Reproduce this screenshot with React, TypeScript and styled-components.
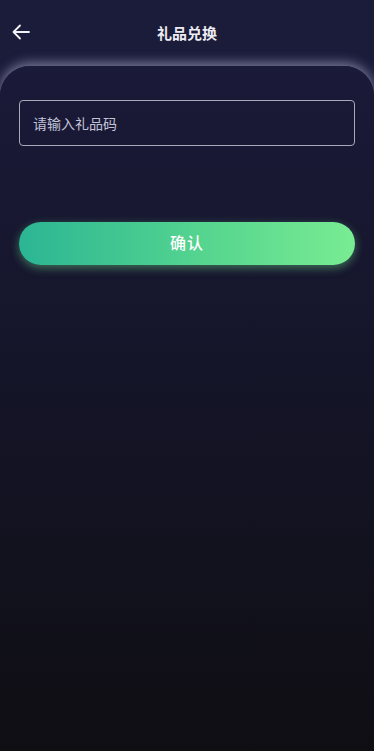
import React from "react";
import styled, { createGlobalStyle } from "styled-components";

const Global = createGlobalStyle`
  html, body { margin: 0; padding: 0; background: #1b1b3a; }
  body { font-family: "Noto Sans CJK SC", "Noto Sans", sans-serif; }
  * { box-sizing: border-box; }
`;

const Page = styled.div`
  width: 374px;
  height: 751px;
  background: #1b1b3a;
  display: flex;
  flex-direction: column;
  overflow: hidden;
`;

const Header = styled.header`
  height: 66px;
  flex: 0 0 66px;
  display: flex;
  align-items: center;
  justify-content: center;
  position: relative;
  padding-bottom: 2px;
`;

const BackButton = styled.button`
  position: absolute;
  left: 11px;
  top: 22px;
  width: 20px;
  height: 20px;
  padding: 0;
  border: none;
  background: transparent;
  display: flex;
  align-items: center;
  justify-content: center;
`;

const Title = styled.h1`
  margin: 0;
  font-size: 15px;
  font-weight: 700;
  color: #ececf2;
  line-height: 1;
`;

const Card = styled.main`
  flex: 1;
  border-radius: 30px 30px 0 0;
  background: linear-gradient(180deg, #1a1a39 0%, #151529 45%, #0f0e13 100%);
  box-shadow: 0 -3px 12px rgba(200, 200, 235, 0.55);
  padding: 34px 19px 0;
  display: flex;
  flex-direction: column;
  gap: 76px;
`;

const Input = styled.input`
  width: 100%;
  height: 46px;
  border: 1px solid #a9a9b8;
  border-radius: 4px;
  background: transparent;
  padding: 0 13px;
  font-family: "Noto Sans CJK SC", "Noto Sans", sans-serif;
  font-size: 14px;
  color: #e0e0ea;
  outline: none;
  &::placeholder { color: #c2c4d8; }
`;

const Confirm = styled.button`
  width: 100%;
  height: 43px;
  border: none;
  border-radius: 22px;
  background: linear-gradient(90deg, #2bb594 0%, #55d58f 55%, #79ec93 100%);
  box-shadow: 0 3px 10px rgba(110, 225, 140, 0.45);
  color: #ffffff;
  font-family: "Noto Sans CJK SC", "Noto Sans", sans-serif;
  font-size: 16px;
  font-weight: 500;
  line-height: 1;
  padding: 0 0 3px;
  letter-spacing: 1px;
`;

export default function App() {
  return (
    <>
      <Global />
      <Page>
        <Header>
          <BackButton aria-label="back">
            <svg width="18" height="16" viewBox="0 0 18 16" fill="none">
              <path d="M8 1.5L1.5 8L8 14.5M1.5 8H17" stroke="#f2f2f6" strokeWidth="1.8" strokeLinecap="round" strokeLinejoin="round" />
            </svg>
          </BackButton>
          <Title>礼品兑换</Title>
        </Header>
        <Card>
          <Input placeholder="请输入礼品码" />
          <Confirm>确认</Confirm>
        </Card>
      </Page>
    </>
  );
}
